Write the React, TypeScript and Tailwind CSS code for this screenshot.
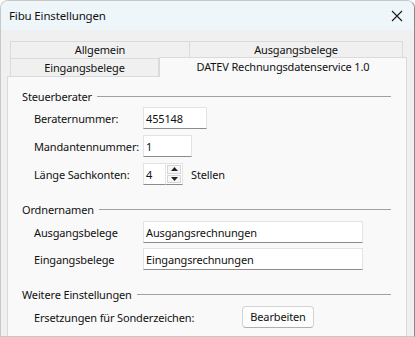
import React from "react";

const font = { fontFamily: '"Noto Sans", "Segoe UI", sans-serif' };

function GroupHeader({ title, className = "" }: { title: string; className?: string }) {
  return (
    <div className={`flex h-[16px] items-center ${className}`}>
      <span className="whitespace-nowrap leading-none">{title}</span>
      <div className="ml-[5px] h-px flex-1 bg-[#a0a0a0]" />
    </div>
  );
}

function TextBox({ value, w, className = "" }: { value: string; w: string; className?: string }) {
  return (
    <div
      className={`flex h-[22px] shrink-0 items-center border border-[#e3e3e3] border-b-[#8c8c8c] bg-white pl-[2px] ${w} ${className}`}
    >
      <span className="leading-none">{value}</span>
    </div>
  );
}

function Row({ label, children, className = "" }: { label: string; children: React.ReactNode; className?: string }) {
  return (
    <div className={`flex items-center ${className}`}>
      <div className="w-[121px] shrink-0 whitespace-nowrap pl-[12px] leading-none">{label}</div>
      {children}
    </div>
  );
}

export default function App() {
  return (
    <div style={font} className="text-[11px] tracking-[-0.15px] text-[#111]">
      <div className="h-[337px] w-[415px] overflow-hidden rounded-t-[8px] border border-[#c8c8c8] border-r-[#8a8a8a] bg-[#f0f0f0]">
        {/* Title bar */}
        <div className="flex h-[29px] items-center justify-between bg-[#eef6f9] pl-[8px] pr-[10px]">
          <span className="text-[11.5px]">Fibu Einstellungen</span>
          <svg width="12" height="12" viewBox="0 0 12 12" className="mr-[1px]">
            <path d="M1 1 L11 11 M11 1 L1 11" stroke="#1a1a1a" strokeWidth="1.1" />
          </svg>
        </div>

        {/* Tab control */}
        <div className="ml-[6px] mt-[11px] w-[400px]">
          {/* Row 1 */}
          <div className="ml-[3px] flex h-[17px] w-[393px]">
            <div className="flex w-[180px] items-center justify-center border border-b-0 border-[#dadada] bg-[#f0f0f0]">
              Allgemein
            </div>
            <div className="flex flex-1 items-center justify-center border border-b-0 border-l-0 border-[#dadada] bg-[#f0f0f0]">
              Ausgangsbelege
            </div>
          </div>
          {/* Row 2 */}
          <div className="relative z-10 ml-[3px] flex h-[18px]">
            <div className="flex w-[149px] items-center justify-center border border-b-0 border-[#dadada] bg-[#f0f0f0] pt-[1px]">
              Eingangsbelege
            </div>
            <div className="-mt-[1px] flex h-[20px] w-[248px] items-start justify-center border border-b-0 border-[#dadada] bg-[#f9f9f9] pt-[1px]">
              DATEV Rechnungsdatenservice 1.0
            </div>
          </div>
          {/* Panel */}
          <div className="h-[270px] border border-[#dadada] bg-[#f9f9f9] pl-[14px] pr-[15px] pt-[11px]">
            <GroupHeader title="Steuerberater" />
            <Row label="Beraternummer:" className="mt-[3px]">
              <TextBox value="455148" w="w-[64px]" />
            </Row>
            <Row label="Mandantennummer:" className="mt-[6px]">
              <TextBox value="1" w="w-[49px]" />
            </Row>
            <Row label="Länge Sachkonten:" className="mt-[6px]">
              <TextBox value="4" w="w-[23px]" />
              <div className="flex h-[22px] w-[17px] flex-col border-y border-r border-[#e3e3e3] border-b-[#8c8c8c] bg-white">
                <div className="m-[1px] flex flex-1 items-center justify-center border border-[#d6d6d6] bg-[#f7f7f7]">
                  <svg width="7" height="4" viewBox="0 0 7 4">
                    <path d="M0 4 L3.5 0 L7 4 Z" fill="#222" />
                  </svg>
                </div>
                <div className="m-[1px] mt-0 flex flex-1 items-center justify-center border border-[#d6d6d6] bg-[#f7f7f7]">
                  <svg width="7" height="4" viewBox="0 0 7 4">
                    <path d="M0 0 L7 0 L3.5 4 Z" fill="#222" />
                  </svg>
                </div>
              </div>
              <span className="ml-[8px] leading-none">Stellen</span>
            </Row>

            <GroupHeader title="Ordnernamen" className="mt-[16px]" />
            <Row label="Ausgangsbelege" className="mt-[4px]">
              <TextBox value="Ausgangsrechnungen" w="w-[220px]" />
            </Row>
            <Row label="Eingangsbelege" className="mt-[5px]">
              <TextBox value="Eingangsrechnungen" w="w-[220px]" />
            </Row>

            <GroupHeader title="Weitere Einstellungen" className="mt-[16px]" />
            <div className="mt-[4px] flex items-center">
              <div className="w-[220px] shrink-0 pl-[12px] leading-none">Ersetzungen für Sonderzeichen:</div>
              <div className="flex h-[22px] w-[72px] items-center justify-center rounded-[4px] border border-[#d3d3d3] border-b-[#b0b0b0] bg-[#fdfdfd]">
                Bearbeiten
              </div>
            </div>
          </div>
        </div>
      </div>
    </div>
  );
}
